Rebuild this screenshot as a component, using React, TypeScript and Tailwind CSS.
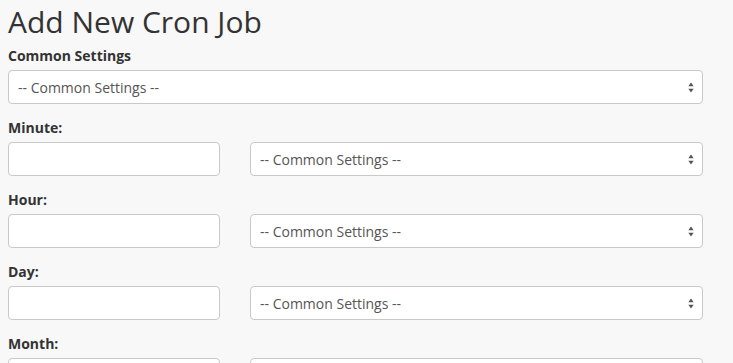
import React from "react";

const FONT = { fontFamily: '"Open Sans", "Noto Sans", sans-serif' };

function Arrows() {
  return (
    <svg className="w-[6px] h-[11px] shrink-0" viewBox="0 0 6 11" fill="#555">
      <path d="M3 0.5 L5.6 4.3 L0.4 4.3 Z" />
      <path d="M3 10.5 L5.6 6.7 L0.4 6.7 Z" />
    </svg>
  );
}

function FakeSelect({ width }: { width: string }) {
  return (
    <div
      className={`${width} h-[34px] flex items-center justify-between bg-white border border-[#c9c9c9] rounded-[4px] pl-[9px] pr-[8px] text-[14px] text-[#555]`}
    >
      <span>-- Common Settings --</span>
      <Arrows />
    </div>
  );
}

function Field({ label }: { label: string }) {
  return (
    <div className="mb-[15px]">
      <div className="h-[18px] leading-[18px] mb-[5px] text-[14px] font-bold text-[#333]">{label}</div>
      <div className="flex gap-[30px]">
        <div className="w-[212px] h-[34px] bg-white border border-[#c9c9c9] rounded-[4px]" />
        <FakeSelect width="w-[453px]" />
      </div>
    </div>
  );
}

export default function App() {
  return (
    <div className="w-[733px] h-[363px] overflow-hidden bg-[#f8f8f8] px-[8px] pt-[5px]" style={FONT}>
      <h2 className="text-[30px] leading-[33px] font-normal text-[#333] mb-[9px]">Add New Cron Job</h2>
      <div className="mb-[15px]">
        <div className="h-[18px] leading-[18px] mb-[5px] text-[14px] font-bold text-[#333]">Common Settings</div>
        <FakeSelect width="w-[695px]" />
      </div>
      {["Minute:", "Hour:", "Day:", "Month:"].map((l) => (
        <Field key={l} label={l} />
      ))}
    </div>
  );
}
